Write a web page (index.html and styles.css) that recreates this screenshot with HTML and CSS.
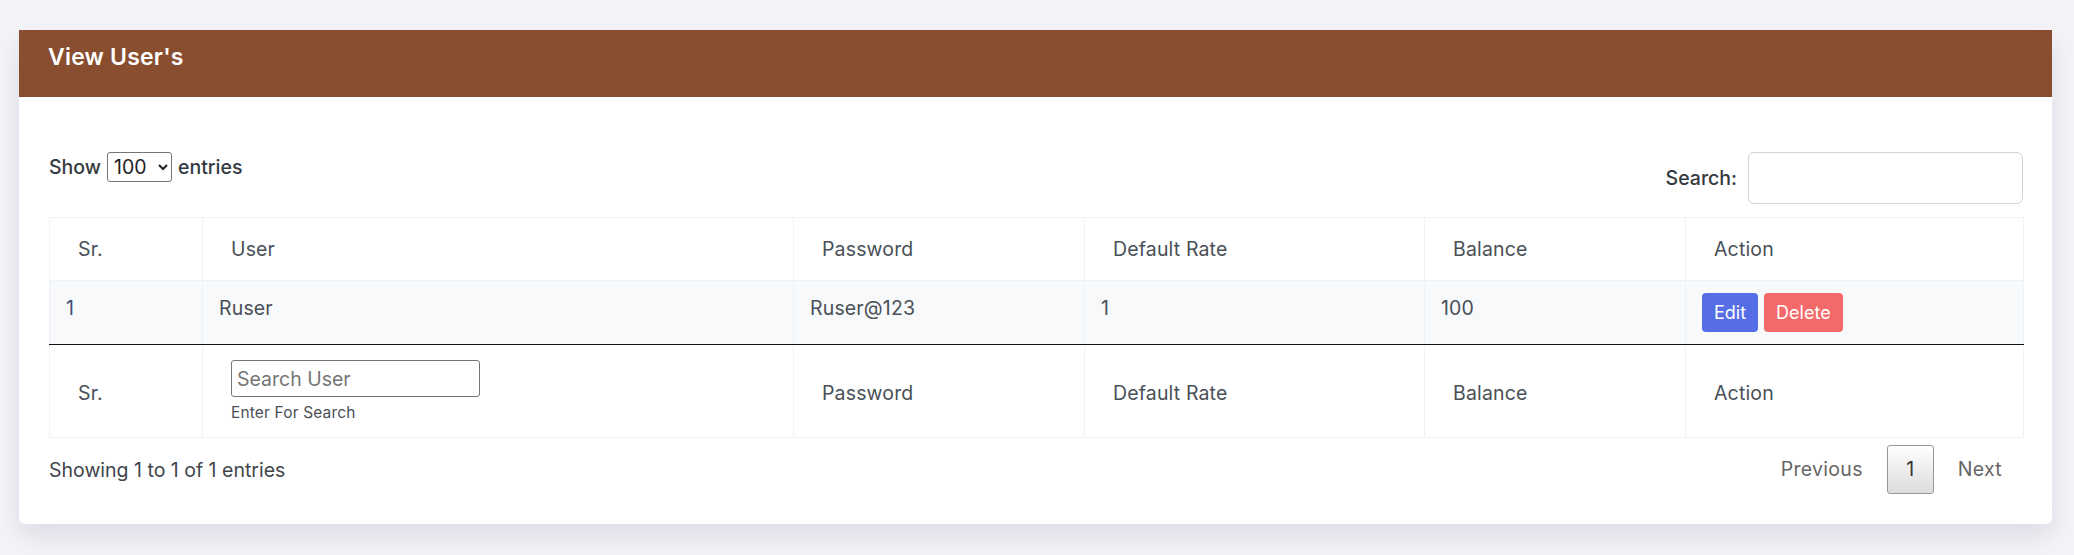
FILE: index.html
```html
<!DOCTYPE html>
<html lang="en">
<head>
<meta charset="utf-8">
<title>View User's</title>
<link rel="stylesheet" href="styles.css">
</head>
<body>
<div class="page">
  <div class="card">
    <div class="card-header">
      <h4 class="card-title">View User's</h4>
    </div>
    <div class="card-body">
      <div class="dt-top">
        <label class="dt-length">Show
          <select class="dt-select">
            <option>10</option>
            <option>25</option>
            <option>50</option>
            <option selected>100</option>
          </select>
          entries</label>
        <label class="dt-filter">Search:
          <input type="search" class="dt-search">
        </label>
      </div>
      <table class="dt-table">
        <colgroup>
          <col class="c-sr">
          <col class="c-user">
          <col class="c-pass">
          <col class="c-rate">
          <col class="c-bal">
          <col class="c-act">
        </colgroup>
        <thead>
          <tr>
            <th>Sr.</th>
            <th>User</th>
            <th>Password</th>
            <th>Default Rate</th>
            <th>Balance</th>
            <th>Action</th>
          </tr>
        </thead>
        <tbody>
          <tr>
            <td class="sr">1</td>
            <td>Ruser</td>
            <td>Ruser@123</td>
            <td>1</td>
            <td>100</td>
            <td>
              <div class="actions">
                <button class="btn btn-edit">Edit</button>
                <button class="btn btn-delete">Delete</button>
              </div>
            </td>
          </tr>
        </tbody>
        <tfoot>
          <tr>
            <th>Sr.</th>
            <th>
              <input type="text" class="foot-search" placeholder="Search User">
              <small class="form-text">Enter For Search</small>
            </th>
            <th>Password</th>
            <th>Default Rate</th>
            <th>Balance</th>
            <th>Action</th>
          </tr>
        </tfoot>
      </table>
      <div class="dt-bottom">
        <div class="dt-info">Showing 1 to 1 of 1 entries</div>
        <div class="dt-paginate">
          <a class="pg-btn disabled">Previous</a>
          <a class="pg-btn current">1</a>
          <a class="pg-btn disabled">Next</a>
        </div>
      </div>
    </div>
  </div>
</div>
</body>
</html>
```
FILE: styles.css
```css
* { box-sizing: border-box; }

html, body {
  margin: 0;
  padding: 0;
}

body {
  background: #f3f3f8;
  font-family: Inter, "Noto Sans", "DejaVu Sans", sans-serif;
  font-size: 19.5px;
  color: #495057;
}

.page {
  padding: 30px 22px 32px 19px;
}

.card {
  background: #ffffff;
  border-radius: 0 0 6px 6px;
  box-shadow: 0 12px 26px rgba(18, 38, 63, 0.10);
}

.card-header {
  height: 67px;
  background: #894e2f;
  padding: 13px 29px 0;
}

.card-title {
  margin: 0;
  font-size: 23px;
  line-height: 28px;
  font-weight: 600;
  color: #ffffff;
  letter-spacing: 0.2px;
}

.card-body {
  padding: 55px 29px 30px 30px;
}

.dt-top {
  display: flex;
  justify-content: space-between;
  align-items: flex-start;
  height: 52px;
  margin-bottom: 13px;
}

.dt-length,
.dt-filter {
  display: flex;
  align-items: center;
  font-weight: 500;
  color: #343a40;
  line-height: 30px;
}

.dt-length { gap: 6px; }
.dt-filter { gap: 11px; }

.dt-select {
  width: 65px;
  height: 30px;
  font-family: inherit;
  font-size: 19.5px;
  font-weight: 400;
  color: #222;
  border: 1px solid #767676;
  border-radius: 3px;
  background: #fff;
  padding: 0 2px;
}

.dt-search {
  width: 275px;
  height: 52px;
  border: 1px solid #ced4da;
  border-radius: 6px;
  font-family: inherit;
  font-size: 19.5px;
  padding: 0 12px;
  background: #fff;
}

.dt-table {
  width: 100%;
  table-layout: fixed;
  border-collapse: collapse;
  border: 1px solid #eff2f7;
}

.c-sr { width: 153px; }
.c-user { width: 591px; }
.c-pass { width: 291px; }
.c-rate { width: 340px; }
.c-bal { width: 261px; }
.c-act { width: 338px; }

.dt-table th,
.dt-table td {
  border: 1px solid #eff2f7;
  text-align: left;
  line-height: 30px;
  color: #495057;
  letter-spacing: 0.15px;
}

.dt-table thead th {
  font-weight: 400;
  padding: 16px 28px;
}

.dt-table tbody td {
  background: #f8f9fa;
  padding: 12px 16px;
  vertical-align: top;
  border-bottom: 1px solid #111111;
}

.dt-table tbody td.sr {
  color: #3d4f74;
}

.dt-table tfoot th {
  font-weight: 400;
  border-top: 1px solid #111111;
  padding: 15px 28px 12px;
  vertical-align: middle;
}

.actions {
  display: flex;
  gap: 6px;
}

.btn {
  height: 39px;
  padding: 0 12px;
  border: none;
  border-radius: 4px;
  font-family: inherit;
  font-size: 18px;
  line-height: 39px;
  color: #ffffff;
  cursor: pointer;
}

.btn-edit { background: #556ee6; }
.btn-delete { background: #f46a6a; }

.foot-search {
  display: block;
  width: 249px;
  height: 37px;
  border: 1px solid #767676;
  border-radius: 3px;
  padding: 0 5px;
  font-family: inherit;
  font-size: 19.5px;
  color: #222;
  background: #fff;
}

.foot-search::placeholder {
  color: #757575;
}

.form-text {
  display: block;
  margin-top: 4px;
  font-size: 15.5px;
  line-height: 24px;
  color: #495057;
}

.dt-bottom {
  display: flex;
  justify-content: space-between;
  align-items: center;
  margin-top: 7px;
}

.dt-info {
  color: #3f454b;
}

.dt-paginate {
  display: flex;
  gap: 7px;
  padding-right: 4px;
}

.pg-btn {
  display: block;
  padding: 0 16px;
  line-height: 47px;
  border: 1px solid transparent;
  border-radius: 3px;
  color: #666666;
  cursor: default;
  letter-spacing: 0.3px;
}

.pg-btn.current {
  min-width: 47px;
  text-align: center;
  color: #333333;
  border-color: #979797;
  background: linear-gradient(to bottom, #ffffff 0%, #dcdcdc 100%);
}
```
